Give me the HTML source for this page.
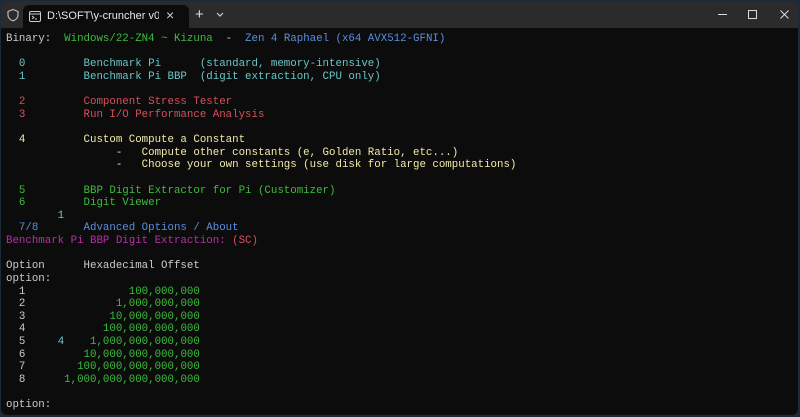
<!DOCTYPE html>
<html><head><meta charset="utf-8"><style>
html,body{margin:0;padding:0;width:800px;height:417px;overflow:hidden;background:#1b2a38;}
.win{position:absolute;left:1px;top:1px;width:797px;height:414px;background:#0c0c0c;border-radius:6px;overflow:hidden;}
.bar{position:absolute;left:0;top:0;width:100%;height:27px;background:#2b2b2b;}
.tab{position:absolute;left:22px;top:4px;width:166px;height:23px;background:#0c0c0c;border-radius:6px 6px 0 0;color:#e8e8e8;font:11px "Liberation Sans",sans-serif;}
.t{position:absolute;font:11px "Liberation Sans",sans-serif;color:#ddd;}
pre{position:absolute;left:5px;top:32px;margin:0;font-family:"Liberation Mono",monospace;font-size:10.78px;line-height:12.63px;color:#cccccc;}
.g{color:#3cbd3c}.b{color:#5a8ee0}.c{color:#6cc6c6}.r{color:#d8505a}.y{color:#f2eca8}.m{color:#b92ea6}.w{color:#cccccc}
</style></head><body><div class="win">
<div class="bar">
<svg style="position:absolute;left:5px;top:7px" width="14" height="14" viewBox="0 0 14 14"><path d="M7 1.5 L12 3.5 V7 C12 10 9.5 12 7 12.8 C4.5 12 2 10 2 7 V3.5 Z" fill="none" stroke="#bbb" stroke-width="1.2"/></svg>
<div class="tab">
<svg style="position:absolute;left:6px;top:6px" width="12" height="11" viewBox="0 0 12 11"><rect x="0.5" y="0.5" width="11" height="10" rx="1.5" fill="none" stroke="#ccc"/><line x1="0.5" y1="3" x2="11.5" y2="3" stroke="#ccc"/><path d="M3 5 L5 6.5 L3 8 M6 8 H8" fill="none" stroke="#ccc"/></svg>
<span style="position:absolute;left:24px;top:5px;white-space:nowrap;width:112px;overflow:hidden">D:\SOFT\y-cruncher v0.8.5.954</span>
<span style="position:absolute;left:143px;top:2px;font-size:14px;color:#ccc">×</span>
</div>
<span class="t" style="left:194px;top:5px;font-size:15px">+</span>
<svg style="position:absolute;left:215px;top:11px" width="8" height="6" viewBox="0 0 8 6"><path d="M1 1 L4 4 L7 1" fill="none" stroke="#ccc" stroke-width="1.2"/></svg>
<div style="position:absolute;left:717px;top:13px;width:9px;height:1px;background:#ddd"></div>
<div style="position:absolute;left:747px;top:9px;width:7px;height:7px;border:1px solid #ddd"></div>
<svg style="position:absolute;left:779px;top:9px" width="9" height="9" viewBox="0 0 9 9"><path d="M0.5 0.5 L8.5 8.5 M8.5 0.5 L0.5 8.5" stroke="#ddd" stroke-width="1"/></svg>
</div>
<pre><span class="w">Binary:  </span><span class="g">Windows/22-ZN4 ~ Kizuna</span><span class="w">  -  </span><span class="b">Zen 4 Raphael (x64 AVX512-GFNI)</span>

<span class="c">  0         Benchmark Pi      (standard, memory-intensive)</span>
<span class="c">  1         Benchmark Pi BBP  (digit extraction, CPU only)</span>

<span class="r">  2         Component Stress Tester</span>
<span class="r">  3         Run I/O Performance Analysis</span>

<span class="y">  4         Custom Compute a Constant</span>
<span class="y">                 -   Compute other constants (e, Golden Ratio, etc...)</span>
<span class="y">                 -   Choose your own settings (use disk for large computations)</span>

<span class="g">  5         BBP Digit Extractor for Pi (Customizer)</span>
<span class="g">  6         Digit Viewer</span>
<span class="c">        1</span>
<span class="b">  7/8       Advanced Options / About</span>
<span class="m">Benchmark Pi BBP Digit Extraction: </span><span class="r">(SC)</span>

<span class="w">Option      Hexadecimal Offset</span>
<span class="w">option:</span>
<span class="w">  1</span><span class="g">                100,000,000</span>
<span class="w">  2</span><span class="g">              1,000,000,000</span>
<span class="w">  3</span><span class="g">             10,000,000,000</span>
<span class="w">  4</span><span class="g">            100,000,000,000</span>
<span class="w">  5     </span><span class="c">4</span><span class="g">    1,000,000,000,000</span>
<span class="w">  6</span><span class="g">         10,000,000,000,000</span>
<span class="w">  7</span><span class="g">        100,000,000,000,000</span>
<span class="w">  8</span><span class="g">      1,000,000,000,000,000</span>

<span class="w">option:</span></pre>
</div></body></html>
